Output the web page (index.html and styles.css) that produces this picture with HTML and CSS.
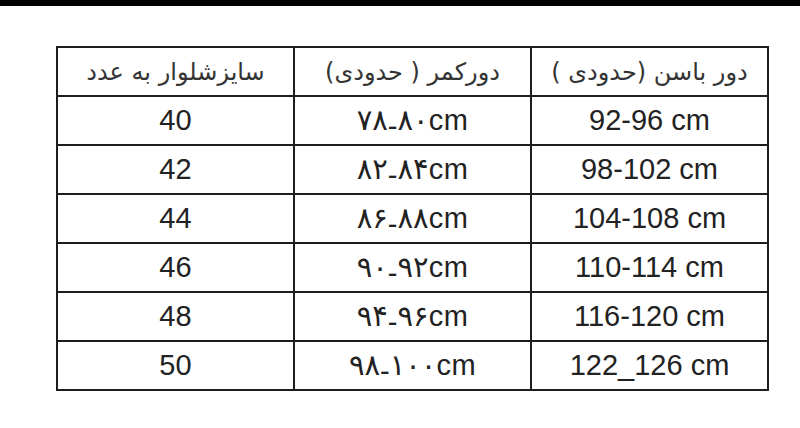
FILE: index.html
```html
<!DOCTYPE html>
<html lang="fa">
<head>
<meta charset="utf-8">
<link rel="stylesheet" href="styles.css">
</head>
<body>
<div class="topbar"></div>
<div class="wrap">
<table class="sizes">
<tr class="head">
<th dir="rtl">سایزشلوار به عدد</th>
<th dir="rtl">دورکمر ( حدودی)</th>
<th dir="rtl">دور باسن (حدودی )</th>
</tr>
<tr><td>40</td><td class="fa">۷۸<span class="dash">-</span>۸۰cm</td><td>92-96 cm</td></tr>
<tr><td>42</td><td class="fa">۸۲<span class="dash">-</span>۸۴cm</td><td>98-102 cm</td></tr>
<tr><td>44</td><td class="fa">۸۶<span class="dash">-</span>۸۸cm</td><td>104-108 cm</td></tr>
<tr><td>46</td><td class="fa">۹۰<span class="dash">-</span>۹۲cm</td><td>110-114 cm</td></tr>
<tr><td>48</td><td class="fa">۹۴<span class="dash">-</span>۹۶cm</td><td>116-120 cm</td></tr>
<tr><td>50</td><td class="fa">۹۸<span class="dash">-</span>۱۰۰cm</td><td>122_126 cm</td></tr>
</table>
</div>
</body>
</html>
```
FILE: styles.css
```css
html, body {
  margin: 0;
  padding: 0;
  background: #ffffff;
}
body {
  width: 800px;
  height: 428px;
  overflow: hidden;
  font-family: "Liberation Sans", "DejaVu Sans", sans-serif;
  color: #222222;
}
.topbar {
  height: 6px;
  background: #000000;
}
.wrap {
  padding: 40px 0 0 56px;
}
.sizes {
  border-collapse: collapse;
  width: 713px;
  table-layout: fixed;
}
.sizes th,
.sizes td {
  border: 2px solid #1e1e1e;
  height: 47px;
  padding: 0;
  text-align: center;
  vertical-align: middle;
  font-size: 29px;
  font-weight: normal;
  line-height: 1;
}
.sizes th {
  font-family: "DejaVu Sans", sans-serif;
  font-size: 24px;
  color: #333333;
}
.sizes td.fa {
  direction: ltr;
  unicode-bidi: bidi-override;
  letter-spacing: 0.5px;
}
.dash {
  line-height: 0;
  vertical-align: -0.2em;
}
```
